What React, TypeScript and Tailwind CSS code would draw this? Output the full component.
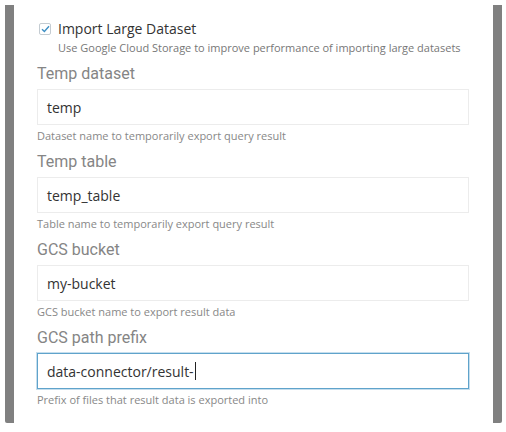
import React from 'react';

const fields = [
  { label: 'Temp dataset', value: 'temp', help: 'Dataset name to temporarily export query result' },
  { label: 'Temp table', value: 'temp_table', help: 'Table name to temporarily export query result' },
  { label: 'GCS bucket', value: 'my-bucket', help: 'GCS bucket name to export result data' },
  { label: 'GCS path prefix', value: 'data-connector/result-', help: 'Prefix of files that result data is exported into', focused: true },
];

const Field = ({ label, value, help, focused }: { label: string; value: string; help: string; focused?: boolean }) => (
  <div className="flex flex-col">
    <div className="h-[20px] text-[16px] leading-[20px] text-[#858585] font-['Roboto',sans-serif]">{label}</div>
    <div
      className={`mt-[5px] h-[36px] flex items-center px-[9px] bg-white text-[14px] text-[#333] font-['Open_Sans',sans-serif] border ${
        focused ? 'border-[#5fa3cb] shadow-[0_0_0_1px_rgba(160,200,225,0.6)]' : 'border-[#ececec]'
      }`}
    >
      {value}
      {focused && <span className="w-px h-[18px] bg-[#222] ml-px" />}
    </div>
    <div className="mt-[4px] text-[11px] leading-[14px] text-[#888] font-['Open_Sans',sans-serif]">{help}</div>
  </div>
);

export default function App() {
  return (
    <div className="w-[506px] h-[432px] bg-white flex">
      <div className="ml-[5px] mt-[5px] w-[9px] h-[418px] bg-[#808080] rounded-bl-[2px]" />
      <div className="flex-1 pl-[23px] pr-[24px] pt-[20px] flex flex-col">
        <div className="flex items-start gap-[7px] pl-[2px]">
          <div className="mt-[3px] w-[12px] h-[12px] border border-[#c4ccd2] rounded-[2px] flex items-center justify-center">
            <svg width="9" height="8" viewBox="0 0 9 8">
              <path d="M1 4.2 L3.4 6.5 L8 1.3" fill="none" stroke="#3d8fc4" strokeWidth="1.4" />
            </svg>
          </div>
          <div className="flex flex-col font-['Open_Sans',sans-serif]">
            <span className="text-[14px] leading-[18px] text-[#333]">Import Large Dataset</span>
            <span className="mt-[2px] text-[11px] leading-[15px] text-[#777]">
              Use Google Cloud Storage to improve performance of importing large datasets
            </span>
          </div>
        </div>
        <div className="mt-[9px] flex flex-col gap-[9px]">
          {fields.map(f => (
            <Field key={f.label} {...f} />
          ))}
        </div>
      </div>
      <div className="mr-[4px] mt-[5px] w-[9px] h-[418px] bg-[#808080] rounded-br-[2px]" />
    </div>
  );
}
